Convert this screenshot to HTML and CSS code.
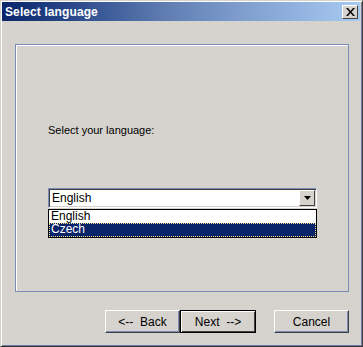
FILE: index.html
```html
<!DOCTYPE html>
<html lang="en">
<head>
  <meta charset="UTF-8">
  <title>Select language</title>
  <link rel="stylesheet" href="styles.css">
</head>
<body>
  <div class="window">
    <div class="titlebar">
      <span class="title">Select language</span>
      <span class="close-btn">
        <svg width="9" height="8" viewBox="0 0 9 8"><path d="M0 0h2l2.5 3 2.5-3h2L5.5 4 9 8H7L4.5 5 2 8H0l3.5-4z" fill="#000"/></svg>
      </span>
    </div>

    <div class="content">
      <div class="panel">
        <p class="prompt">Select your language:</p>
        <div class="combo-wrap">
          <div class="combo">
            <span class="combo-value">English</span>
            <span class="combo-arrow">
              <svg width="7" height="4" viewBox="0 0 7 4"><path d="M0 0h7L3.5 4z" fill="#000"/></svg>
            </span>
          </div>
          <ul class="dropdown">
            <li>English</li>
            <li class="selected">Czech</li>
          </ul>
        </div>
      </div>

      <div class="buttons">
        <button class="btn">&lt;--&nbsp;&nbsp;Back</button>
        <button class="btn default">Next&nbsp;&nbsp;--&gt;</button>
        <button class="btn cancel">Cancel</button>
      </div>
    </div>
  </div>
</body>
</html>
```

FILE: styles.css
```css
body { margin: 0; background: #d6d3ce; font-family: "Liberation Sans", Arial, sans-serif; font-size: 11px; color: #000; }

.window {
  width: 363px;
  height: 347px;
  box-sizing: border-box;
  background: #d6d3ce;
  border-top: 1px solid #d6d3ce;
  border-left: 1px solid #d6d3ce;
  border-right: 1px solid #404040;
  border-bottom: 1px solid #303030;
  box-shadow: inset 1px 1px 0 #fff, inset -1px -1px 0 #6a7da8;
  padding: 1px 2px 2px 1px;
  display: flex;
  flex-direction: column;
}

.titlebar {
  height: 19px;
  background: linear-gradient(to right, #0b256b 0%, #2a4a8c 20%, #5e7cb0 45%, #7c9bcc 65%, #a7caf1 100%);
  display: flex;
  align-items: center;
  justify-content: space-between;
  padding: 0 2px 0 3px;
}
.title { color: #fff; font-weight: bold; font-size: 12px; letter-spacing: 0.1px; }

.close-btn {
  width: 16px;
  height: 14px;
  box-sizing: border-box;
  background: #d6d3ce;
  border-top: 1px solid #fff;
  border-left: 1px solid #fff;
  border-right: 1px solid #404040;
  border-bottom: 1px solid #404040;
  display: flex;
  align-items: center;
  justify-content: center;
}

.content { flex: 1; padding: 23px 11px 0 13px; }

.panel {
  height: 248px;
  box-sizing: border-box;
  border: 1px solid #7a8bb8;
  box-shadow: inset 1px 1px 0 #fff;
  padding: 0 31px 0 32px;
}

.prompt { margin: 79px 0 0; line-height: 13px; }

.combo-wrap { position: relative; margin-top: 51px; }

.combo {
  height: 20px;
  box-sizing: border-box;
  background: #fff;
  border-top: 1px solid #7a8bb8;
  border-left: 1px solid #7a8bb8;
  border-right: 1px solid #fff;
  border-bottom: 1px solid #fff;
  box-shadow: inset 1px 1px 0 #404040, inset -1px -1px 0 #d6d3ce;
  display: flex;
  align-items: center;
  justify-content: space-between;
  padding: 0 1px 0 3px;
}
.combo-value { font-size: 12px; }

.combo-arrow {
  width: 16px;
  height: 16px;
  box-sizing: border-box;
  background: #d6d3ce;
  border-top: 1px solid #fff;
  border-left: 1px solid #fff;
  border-right: 1px solid #404040;
  border-bottom: 1px solid #404040;
  display: flex;
  align-items: center;
  justify-content: center;
}

.dropdown {
  position: absolute;
  top: 21px;
  left: 0;
  right: 0;
  margin: 0;
  padding: 0;
  list-style: none;
  background: #fff;
  border: 1px solid #000;
}
.dropdown li { height: 13px; line-height: 13px; padding-left: 2px; font-size: 12px; box-sizing: border-box; }
.dropdown li.selected {
  height: 14px;
  background: #0a246a;
  color: #fff;
  outline: 1px dotted #f0e68c;
  outline-offset: -1px;
}

.buttons { display: flex; justify-content: flex-end; margin-top: 18px; }

.btn {
  width: 75px;
  height: 23px;
  box-sizing: border-box;
  background: #d6d3ce;
  font-family: "Liberation Sans", Arial, sans-serif;
  font-size: 12px;
  color: #000;
  border-top: 1px solid #fff;
  border-left: 1px solid #fff;
  border-right: 1px solid #404040;
  border-bottom: 1px solid #404040;
  box-shadow: inset -1px -1px 0 #7a8bb8;
  padding: 0;
}
.btn.default { width: 76px; border: 1px solid #000; box-shadow: inset 1px 1px 0 #fff, inset -1px -1px 0 #404040; }
.btn.cancel { margin-left: 18px; }
```
